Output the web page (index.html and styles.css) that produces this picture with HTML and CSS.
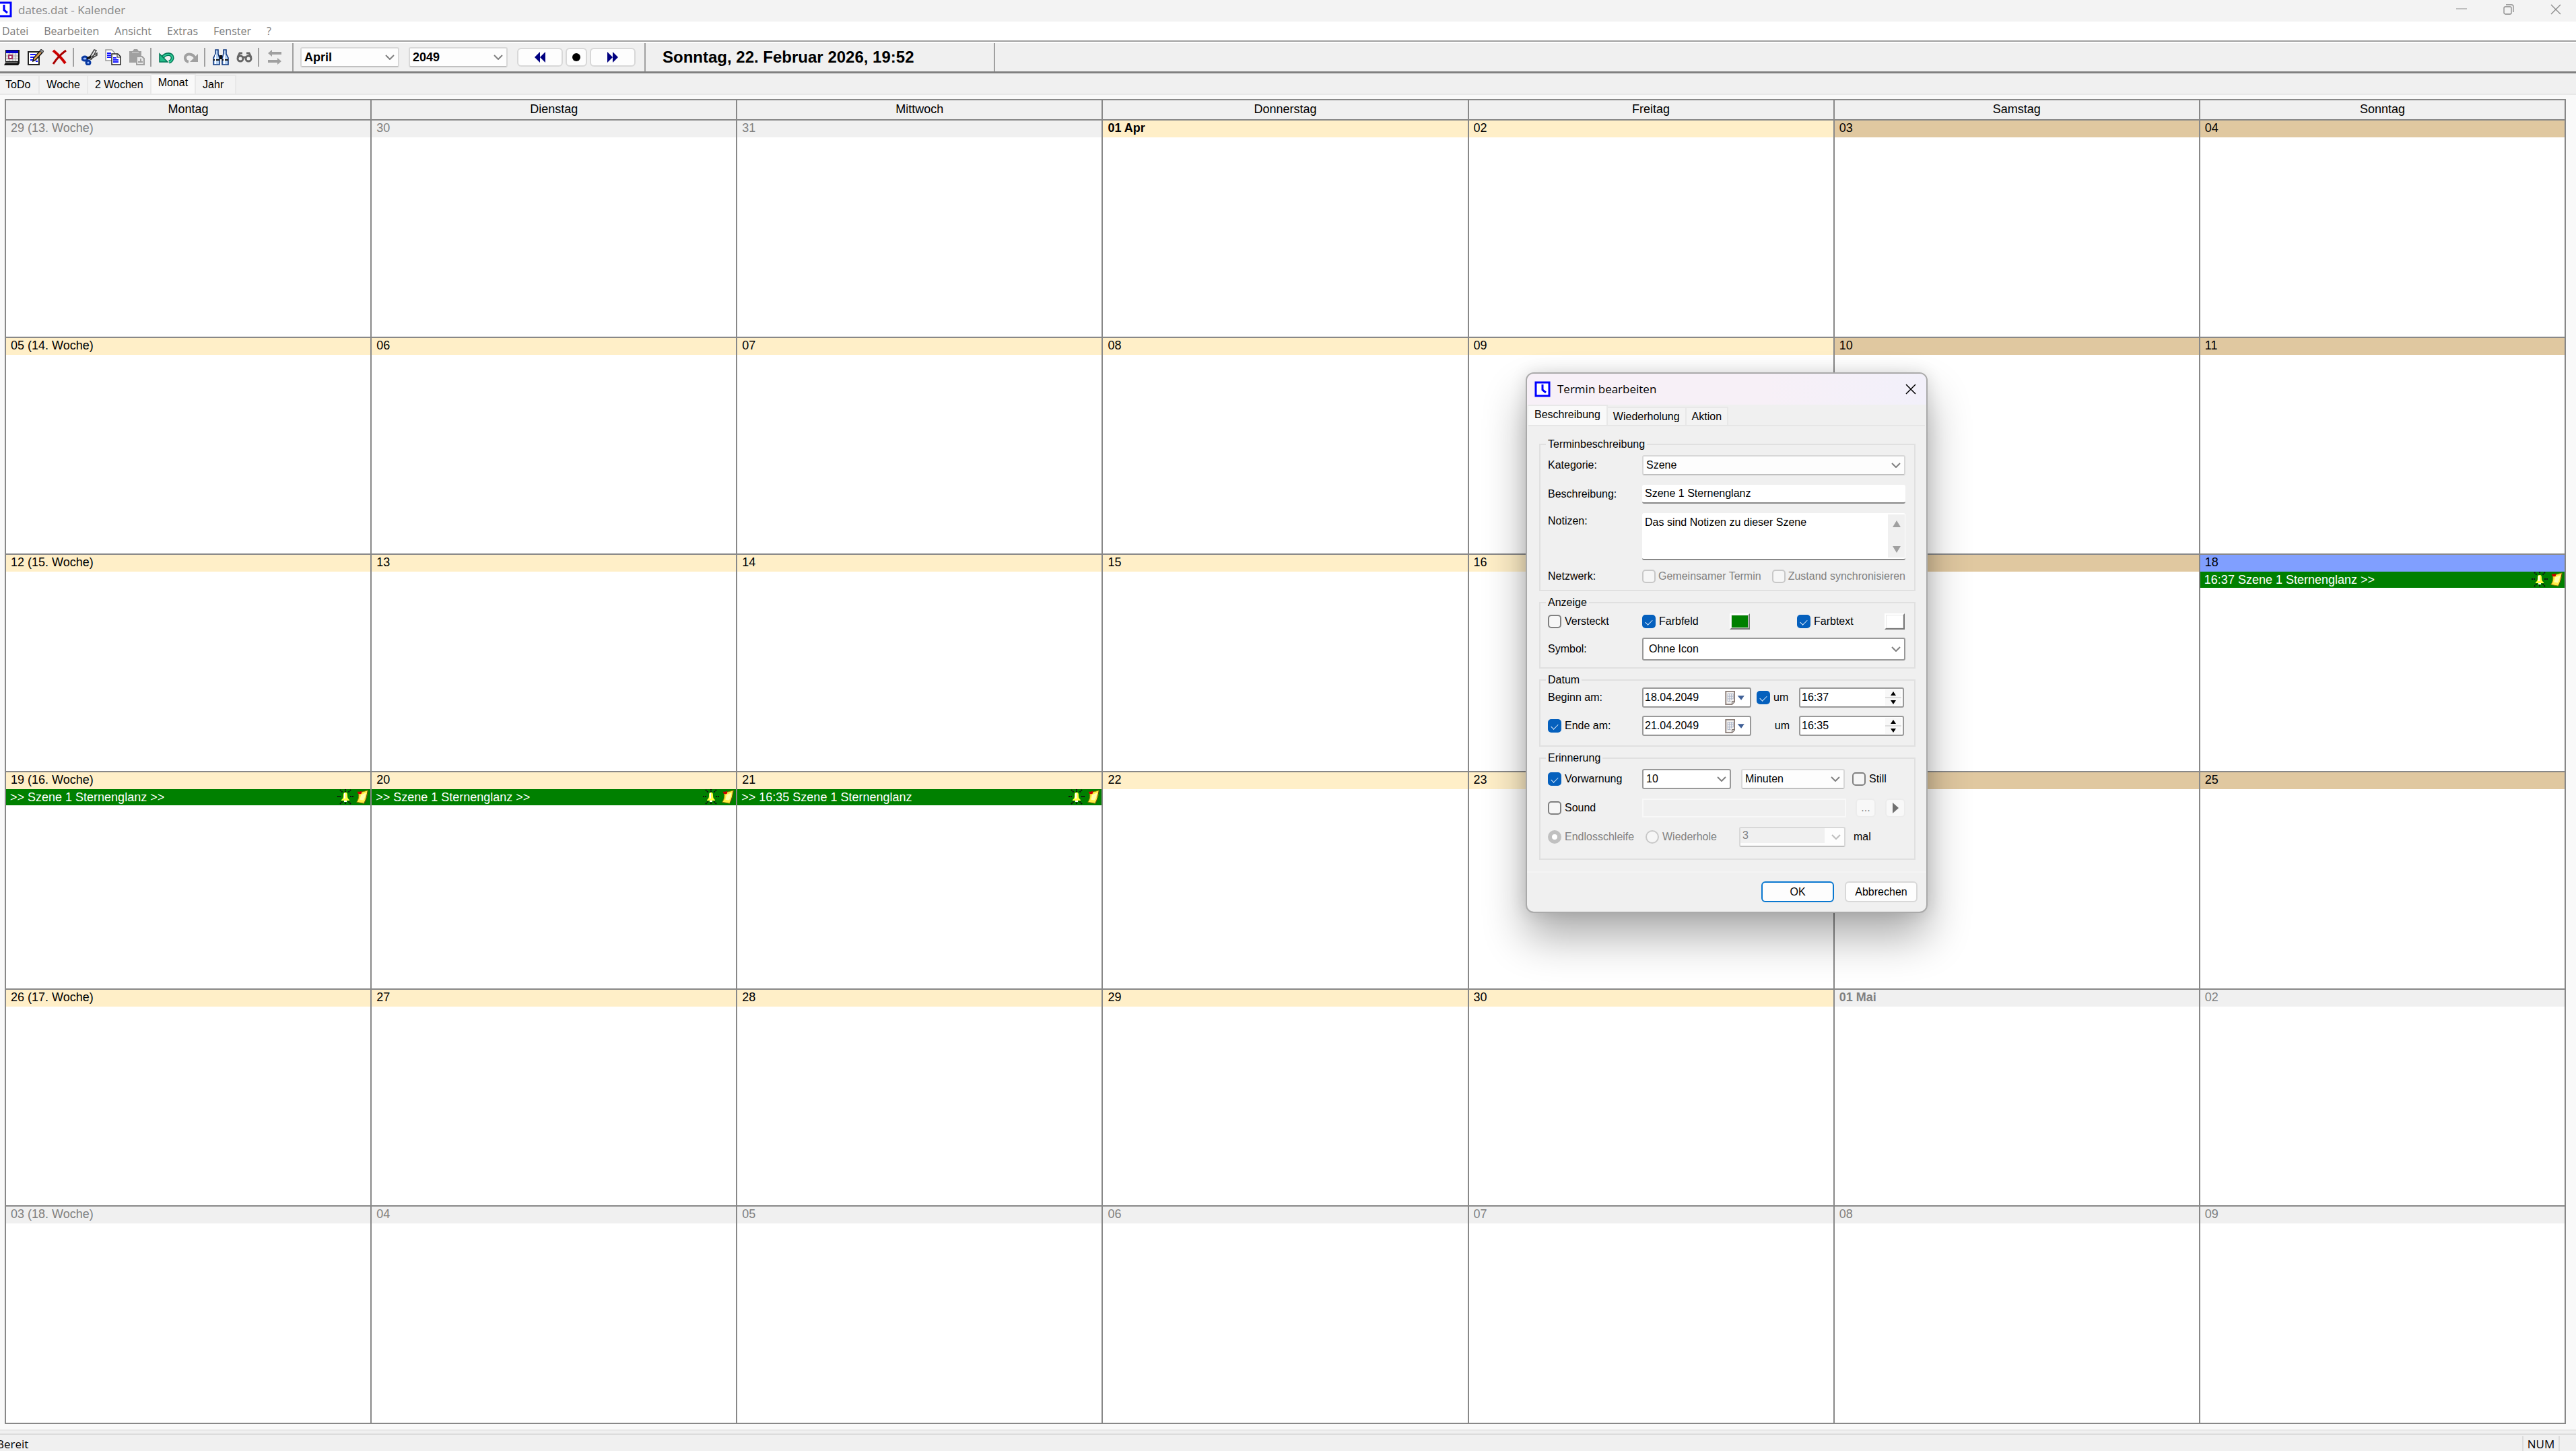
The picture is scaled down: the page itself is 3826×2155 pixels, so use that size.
FILE: index.html
```
<!doctype html>
<html lang="de">
<head>
	<meta charset="utf-8">
	<meta name="viewport" content="width=device-width, initial-scale=1">
	<title>dates.dat - Kalender</title>
	<link rel="stylesheet" href="styles.css">
</head>
<body>

<!-- shared icons -->
<svg class="sprite" aria-hidden="true">
	<symbol id="clock" viewBox="0 0 24 24">
		<rect x="2" y="2" width="20" height="20" fill="#fff" stroke="#00f" stroke-width="3"/>
		<path d="M12 5v8l5 4" fill="none" stroke="#00f" stroke-width="3"/>
	</symbol>
	<symbol id="chevron" viewBox="0 0 14 8">
		<path d="M1 1l6 6 6-6" fill="none" stroke="#808080" stroke-width="2"/>
	</symbol>
	<symbol id="bell" viewBox="0 0 24 24">
		<path d="M4 1l4 4M20 1l-4 4M0 11h5M19 11h5M4 22l4-4M20 22l-4-4M12 0v4M12 20v3" stroke="#111" stroke-width="2" stroke-dasharray="2 1"/>
		<path d="M12 5c-3 0-3 2-3 5s-1 4-3 6v1h12v-1c-2-2-3-3-3-6s0-5-3-5z" fill="#ff4"/>
		<path d="M11 6v8" stroke="#fff" stroke-width="2" fill="none"/>
		<path d="M10 17h4v2h-4z" fill="#fff"/>
	</symbol>
	<symbol id="note" viewBox="0 0 20 24">
		<path d="M4 5l15-4c-1 8-2 13-6 21L1 20c3-4 4-9 3-15z" fill="#fe4" stroke="#970" stroke-width="1"/>
		<path d="M8 8l8-3c-1 6-2 9-4 12l-6-1z" fill="#ffa"/>
		<path d="M2 3h4l3-1v4l-3 1-3-1z" fill="#c00"/>
		<path d="M13 22c4-6 4-12 6-20" stroke="#541" fill="none" stroke-width="1"/>
	</symbol>
	<symbol id="datepick" viewBox="0 0 32 24">
		<path d="M1 2h14v17l-4 4H1z" fill="#f4f2f0" stroke="#8a7d78" stroke-width="2"/>
		<path d="M4 6h9M4 10h9M4 14h9M4 18h5M4 6v12M7 6v12M10 6v10M13 6v8" stroke="#aab4c8" stroke-width="1"/>
		<path d="M15 18h-4v5" fill="#ccc" stroke="#6d625e" stroke-width="1"/>
		<path d="M20 9h11l-5 7z" fill="#3f5f96"/>
	</symbol>
</svg>

<div class="window">
	<header class="titlebar">
		<svg class="app-icon" viewBox="6 0 18 24"><use href="#clock" width="24" height="24"/></svg>
		<span class="titlebar-text">dates.dat - Kalender</span>
		<button class="win-btn" aria-label="Minimieren"><svg width="16" height="16"><path d="M0 7h16" stroke="#888" stroke-width="1"/></svg></button>
		<button class="win-btn" aria-label="Wiederherstellen"><svg width="16" height="16" fill="none" stroke="#888" stroke-width="1.3"><rect x="1" y="4" width="11" height="11" rx="2"/><path d="M4 1h8q3 0 3 3v8"/></svg></button>
		<button class="win-btn" aria-label="Schließen"><svg width="16" height="16"><path d="M1 1l14 14M15 1L1 15" stroke="#888" stroke-width="1.3"/></svg></button>
	</header>

	<nav class="menubar">
		<a href="#datei">Datei</a>
		<a href="#bearbeiten">Bearbeiten</a>
		<a href="#ansicht">Ansicht</a>
		<a href="#extras">Extras</a>
		<a href="#fenster">Fenster</a>
		<a href="#hilfe">?</a>
	</nav>

	<div class="toolbar">
		<div class="tools">
			<button aria-label="Kalender">
				<svg viewBox="0 0 24 24"><path d="M2 1h21v20l-2 3H0l2-4z" fill="#111"/><path d="M3 2h18v4H3z" fill="#00c"/><path d="M3 6h18v12H3z" fill="#e4e4e4"/><path d="M3 10h18M3 14h18M8 6v12M13 6v12M17 6v12" stroke="#a8a8a8"/><path d="M7 9h5v5H7z" fill="#fff" stroke="#a03060" stroke-width="2"/><path d="M2 20h18" stroke="#bbb"/></svg>
			</button>
			<button aria-label="Termin bearbeiten">
				<svg viewBox="0 0 24 24"><path d="M1 4h16v19H1z" fill="#fff" stroke="#222" stroke-width="2"/><path d="M4 8h8M4 12h6M4 16h4M12 18h3" stroke="#11f" stroke-width="2"/><path d="M8 18l1-5 10-11 3 3-10 11z" fill="#d89850" stroke="#111" stroke-width="1.5"/><path d="M18 3l2-3 4 3-2 3z" fill="#888" stroke="#333"/></svg>
			</button>
			<button aria-label="Löschen">
				<svg viewBox="0 0 24 24"><path d="M3 2c5 4 13 12 18 19" stroke="#c00" stroke-width="4" fill="none"/><path d="M22 2C15 7 8 14 3 22" stroke="#a00" stroke-width="3" fill="none"/></svg>
			</button>
			<span class="tool-sep"></span>
			<button aria-label="Ausschneiden">
				<svg viewBox="0 0 24 24"><path d="M11 14L19 1l3 1-7 13zM11 14l12-8v3l-10 6z" fill="#eee" stroke="#444" stroke-width="1.5"/><ellipse cx="5" cy="14" rx="4" ry="3" fill="#9bf" stroke="#0838a0" stroke-width="3"/><ellipse cx="10" cy="20" rx="3" ry="3" fill="#9bf" stroke="#0838a0" stroke-width="3"/><path d="M8 14l6-3" stroke="#111" stroke-width="3"/></svg>
			</button>
			<button aria-label="Kopieren">
				<svg viewBox="0 0 24 24"><path d="M1 1h9l4 4v12H1z" fill="#fff" stroke="#999" stroke-width="1.5"/><path d="M3 6h6M3 9h6M3 12h6" stroke="#11f" stroke-width="2"/><path d="M10 7h9l4 4v12H10z" fill="#fff" stroke="#222" stroke-width="1.5"/><path d="M18 7v5h5" fill="none" stroke="#222"/><path d="M12 13h5M12 16h8M12 19h8" stroke="#11f" stroke-width="2"/></svg>
			</button>
			<button aria-label="Einfügen" disabled>
				<svg viewBox="0 0 24 24"><path d="M1 3h5l2-3h5l2 3h4v17H1z" fill="#a0a0a0"/><path d="M5 5h10" stroke="#ddd"/><path d="M12 11h8l3 3v9H12z" fill="#e8e8e8" stroke="#a0a0a0" stroke-width="2"/><path d="M14 19h7M18 14v4" stroke="#a0a0a0" stroke-width="2"/></svg>
			</button>
			<span class="tool-sep"></span>
			<button aria-label="Rückgängig">
				<svg viewBox="0 0 24 24"><path d="M5 13C10 5 21 6 20 14q-1 4-5 5" fill="none" stroke="#075" stroke-width="5"/><path d="M5 13C10 6 21 6 20 14q-1 4-5 5" fill="none" stroke="#3c9" stroke-width="2"/><path d="M1 7v12h12z" fill="#2b8" stroke="#075" stroke-width="1.5"/></svg>
			</button>
			<button aria-label="Wiederholen" disabled>
				<svg viewBox="0 0 24 24"><path d="M19 13C14 5 3 6 4 14q1 4 5 5" fill="none" stroke="#a0a0a0" stroke-width="4"/><path d="M23 7v12H11z" fill="#a0a0a0"/></svg>
			</button>
			<span class="tool-sep"></span>
			<button aria-label="Suchen">
				<svg viewBox="0 0 24 24"><path d="M4 1h4v6l2 6v10H1V13l3-6zM16 1h4v6l3 6v10h-9V13l2-6z" fill="#b8d4f4" stroke="#123a80" stroke-width="1.6"/><path d="M10 9h4v6h-4z" fill="#111"/><path d="M1 16h9M14 16h9" stroke="#111" stroke-width="2"/><path d="M4 8v14M17 8v14" stroke="#fff" stroke-width="2"/></svg>
			</button>
			<button aria-label="Anzeigen">
				<svg viewBox="0 0 24 24" fill="none" stroke="#666" stroke-width="3"><circle cx="6" cy="14" r="4"/><circle cx="18" cy="14" r="4"/><path d="M2 12l3-6h4M22 12l-3-6h-4M9 12h6"/></svg>
			</button>
			<span class="tool-sep"></span>
			<button aria-label="Synchronisieren" disabled>
				<svg viewBox="0 0 24 24"><path d="M2 6l6-5v3h14v4H8v3zM22 18l-6-5v3H2v4h14v3z" fill="#a0a0a0"/></svg>
			</button>
		</div>
		<div class="toolbar-nav">
			<span class="select month"><select aria-label="Monat"><option>April</option></select><svg><use href="#chevron"/></svg></span>
			<span class="select month"><select aria-label="Jahr"><option>2049</option></select><svg><use href="#chevron"/></svg></span>
			<div class="nav-buttons">
				<button class="btn wide" aria-label="Zurück"><svg width="18" height="16"><path d="M9 0v16L1 8zM17 0v16L9 8z" fill="#000080"/></svg></button>
				<button class="btn" aria-label="Heute"><svg width="12" height="12"><circle cx="6" cy="6" r="6"/></svg></button>
				<button class="btn wide" aria-label="Vor"><svg width="18" height="16"><path d="M1 0v16l8-8zM9 0v16l8-8z" fill="#000080"/></svg></button>
			</div>
		</div>
		<div class="now">Sonntag, 22. Februar 2026, 19:52</div>
	</div>

	<div class="tabs main-tabs" role="tablist">
		<button class="tab" role="tab">ToDo</button>
		<button class="tab" role="tab">Woche</button>
		<button class="tab" role="tab">2 Wochen</button>
		<button class="tab active" role="tab" aria-selected="true">Monat</button>
		<button class="tab last" role="tab">Jahr</button>
	</div>

	<main class="pane">
		<table class="calendar">
			<thead>
				<tr><th>Montag</th><th>Dienstag</th><th>Mittwoch</th><th>Donnerstag</th><th>Freitag</th><th>Samstag</th><th>Sonntag</th></tr>
			</thead>
			<tbody>
				<tr>
					<td class="other"><div class="day">29 (13. Woche)</div></td>
					<td class="other"><div class="day">30</div></td>
					<td class="other"><div class="day">31</div></td>
					<td><div class="day first">01 Apr</div></td>
					<td><div class="day">02</div></td>
					<td class="weekend"><div class="day">03</div></td>
					<td class="weekend"><div class="day">04</div></td>
				</tr>
				<tr>
					<td><div class="day">05 (14. Woche)</div></td>
					<td><div class="day">06</div></td>
					<td><div class="day">07</div></td>
					<td><div class="day">08</div></td>
					<td><div class="day">09</div></td>
					<td class="weekend"><div class="day">10</div></td>
					<td class="weekend"><div class="day">11</div></td>
				</tr>
				<tr>
					<td><div class="day">12 (15. Woche)</div></td>
					<td><div class="day">13</div></td>
					<td><div class="day">14</div></td>
					<td><div class="day">15</div></td>
					<td><div class="day">16</div></td>
					<td class="weekend"><div class="day">17</div></td>
					<td class="selected"><div class="day">18</div>
						<div class="event"><span>16:37 Szene 1 Sternenglanz &gt;&gt;</span><svg class="bell"><use href="#bell"/></svg><svg class="note"><use href="#note"/></svg></div></td>
				</tr>
				<tr>
					<td><div class="day">19 (16. Woche)</div>
						<div class="event"><span>&gt;&gt; Szene 1 Sternenglanz &gt;&gt;</span><svg class="bell"><use href="#bell"/></svg><svg class="note"><use href="#note"/></svg></div></td>
					<td><div class="day">20</div>
						<div class="event"><span>&gt;&gt; Szene 1 Sternenglanz &gt;&gt;</span><svg class="bell"><use href="#bell"/></svg><svg class="note"><use href="#note"/></svg></div></td>
					<td><div class="day">21</div>
						<div class="event"><span>&gt;&gt; 16:35 Szene 1 Sternenglanz</span><svg class="bell"><use href="#bell"/></svg><svg class="note"><use href="#note"/></svg></div></td>
					<td><div class="day">22</div></td>
					<td><div class="day">23</div></td>
					<td class="weekend"><div class="day">24</div></td>
					<td class="weekend"><div class="day">25</div></td>
				</tr>
				<tr>
					<td><div class="day">26 (17. Woche)</div></td>
					<td><div class="day">27</div></td>
					<td><div class="day">28</div></td>
					<td><div class="day">29</div></td>
					<td><div class="day">30</div></td>
					<td class="other"><div class="day first">01 Mai</div></td>
					<td class="other"><div class="day">02</div></td>
				</tr>
				<tr>
					<td class="other"><div class="day">03 (18. Woche)</div></td>
					<td class="other"><div class="day">04</div></td>
					<td class="other"><div class="day">05</div></td>
					<td class="other"><div class="day">06</div></td>
					<td class="other"><div class="day">07</div></td>
					<td class="other"><div class="day">08</div></td>
					<td class="other"><div class="day">09</div></td>
				</tr>
			</tbody>
		</table>
	</main>

	<footer class="statusbar">
		<span class="status-text">Bereit</span>
		<span class="status-num">NUM</span>
	</footer>
</div>

<form class="dialog" role="dialog" aria-labelledby="dialog-title">
	<header class="dialog-title">
		<svg class="dialog-icon"><use href="#clock"/></svg>
		<span id="dialog-title">Termin bearbeiten</span>
		<button type="button" class="dialog-close" aria-label="Schließen"><svg width="16" height="16"><path d="M1 1l14 14M15 1L1 15" stroke="#000" stroke-width="1.5"/></svg></button>
	</header>

	<div class="tabs dialog-tabs" role="tablist">
		<button type="button" class="tab active" role="tab" aria-selected="true">Beschreibung</button>
		<button type="button" class="tab" role="tab">Wiederholung</button>
		<button type="button" class="tab" role="tab">Aktion</button>
	</div>

	<div class="dialog-body">
		<fieldset>
			<legend>Terminbeschreibung</legend>
			<div class="row">
				<label for="kategorie">Kategorie:</label>
				<span class="select"><select id="kategorie"><option>Szene</option></select><svg><use href="#chevron"/></svg></span>
			</div>
			<div class="row">
				<label for="beschreibung">Beschreibung:</label>
				<input type="text" class="line-input" id="beschreibung" value="Szene 1 Sternenglanz">
			</div>
			<div class="row top">
				<label for="notizen">Notizen:</label>
				<div class="notes">
					<textarea id="notizen">Das sind Notizen zu dieser Szene</textarea>
					<div class="scroll">
						<svg width="14" height="12"><path d="M7 1l6 10H1z" fill="#a0a0a0"/></svg>
						<svg width="14" height="12"><path d="M7 11L1 1h12z" fill="#a0a0a0"/></svg>
					</div>
				</div>
			</div>
			<div class="row">
				<span>Netzwerk:</span>
				<div class="pair">
					<label class="check off"><input type="checkbox" disabled>Gemeinsamer Termin</label>
					<label class="check off"><input type="checkbox" disabled>Zustand synchronisieren</label>
				</div>
			</div>
		</fieldset>

		<fieldset class="display">
			<legend>Anzeige</legend>
			<div class="row">
				<label class="check"><input type="checkbox">Versteckt</label>
				<div class="colors">
					<label class="check"><input type="checkbox" checked>Farbfeld</label>
					<button type="button" class="swatch green" aria-label="Feldfarbe"></button>
					<label class="check"><input type="checkbox" checked>Farbtext</label>
					<button type="button" class="swatch" aria-label="Textfarbe"></button>
				</div>
			</div>
			<div class="row">
				<label for="symbol">Symbol:</label>
				<span class="select icon-select"><select id="symbol"><option>Ohne Icon</option></select><svg><use href="#chevron"/></svg></span>
			</div>
		</fieldset>

		<fieldset class="dates">
			<legend>Datum</legend>
			<div class="row">
				<label for="beginn">Beginn am:</label>
				<div class="date-time">
					<div class="field"><input type="text" id="beginn" value="18.04.2049"><svg class="datepick"><use href="#datepick"/></svg></div>
					<label class="check"><input type="checkbox" checked>um</label>
					<div class="field"><input type="text" aria-label="Beginn um" value="16:37">
						<span class="spin"><button type="button" aria-label="Später"><svg width="8" height="6"><path d="M4 0l4 6H0z"/></svg></button><button type="button" aria-label="Früher"><svg width="8" height="6"><path d="M4 6L0 0h8z"/></svg></button></span></div>
				</div>
			</div>
			<div class="row">
				<label class="check"><input type="checkbox" checked>Ende am:</label>
				<div class="date-time">
					<div class="field"><input type="text" aria-label="Ende am" value="21.04.2049"><svg class="datepick"><use href="#datepick"/></svg></div>
					<label class="um" for="ende-um">um</label>
					<div class="field"><input type="text" id="ende-um" value="16:35">
						<span class="spin"><button type="button" aria-label="Später"><svg width="8" height="6"><path d="M4 0l4 6H0z"/></svg></button><button type="button" aria-label="Früher"><svg width="8" height="6"><path d="M4 6L0 0h8z"/></svg></button></span></div>
				</div>
			</div>
		</fieldset>

		<fieldset class="reminder">
			<legend>Erinnerung</legend>
			<div class="row">
				<label class="check"><input type="checkbox" checked>Vorwarnung</label>
				<div class="warn">
					<span class="select edit"><select aria-label="Vorwarnzeit"><option>10</option></select><svg><use href="#chevron"/></svg></span>
					<span class="select"><select aria-label="Einheit"><option>Minuten</option></select><svg><use href="#chevron"/></svg></span>
					<label class="check"><input type="checkbox">Still</label>
				</div>
			</div>
			<div class="row">
				<label class="check"><input type="checkbox">Sound</label>
				<div class="sound">
					<input type="text" aria-label="Sounddatei" disabled>
					<button type="button" class="btn small" disabled>...</button>
					<button type="button" class="btn small" aria-label="Abspielen" disabled><svg width="10" height="16"><path d="M1 0l9 8-9 8z" fill="#707070"/></svg></button>
				</div>
			</div>
			<div class="row loop">
				<label class="check off"><input type="radio" name="loop" checked disabled>Endlosschleife</label>
				<label class="check off"><input type="radio" name="loop" disabled>Wiederhole</label>
				<span class="select count"><select id="mal" disabled><option>3</option></select><svg><use href="#chevron"/></svg></span>
				<label for="mal">mal</label>
			</div>
		</fieldset>
	</div>

	<footer class="dialog-footer">
		<button type="button" class="btn default">OK</button>
		<button type="button" class="btn">Abbrechen</button>
	</footer>
</form>

</body>
</html>
```
FILE: styles.css
```
* {
	box-sizing: border-box;
}

body {
	margin: 0;
	background: #f0f0f0;
	color: #000;
	font: 16px/20px "Liberation Sans", Arial, sans-serif;
}

button, input, select, textarea {
	font: inherit;
	color: inherit;
	margin: 0;
	padding: 0;
	border: 0;
	border-radius: 0;
	background: none;
	outline: none;
}

svg {
	display: block;
}

.sprite {
	display: none;
}

.window {
	display: flex;
	flex-direction: column;
	height: 100vh;
	overflow: hidden;
}

/* title bar and menu */

.titlebar {
	display: flex;
	align-items: center;
	height: 32px;
	background: #f3f3f3;
	color: #888;
	font: 17px/24px "Open Sans", "Noto Sans", sans-serif;
}

.app-icon {
	width: 18px;
	height: 24px;
	margin: 0 9px 4px 0;
}

.titlebar-text {
	flex: 1;
	padding-bottom: 2px;
}

.win-btn {
	display: flex;
	justify-content: center;
	align-items: center;
	width: 70px;
	height: 28px;
	margin-bottom: 4px;
}

.win-btn:last-child {
	margin-right: -5px;
}

.menubar {
	display: flex;
	align-items: center;
	gap: 23px;
	height: 28px;
	padding: 0 3px;
	background: #fff;
	font: 16px/24px "Open Sans", "Noto Sans", sans-serif;
}

.menubar a {
	color: #7c7c7c;
	text-decoration: none;
}

/* toolbar */

.toolbar {
	display: flex;
	height: 49px;
	border-top: 2px solid #a0a0a0;
	border-bottom: 3px solid #808080;
	box-shadow: inset 0 2px #fff;
	padding-top: 2px;
}

.tools, .toolbar-nav, .now {
	display: flex;
	align-items: center;
	border-right: 2px solid #a0a0a0;
}

.tools {
	padding-right: 9px;
}

.tools button {
	display: flex;
	justify-content: center;
	align-items: center;
	width: 35px;
	height: 36px;
}

.tools svg {
	width: 24px;
	height: 24px;
}

.tool-sep {
	width: 2px;
	height: 28px;
	margin: 0 5px 0 3px;
	background: #a0a0a0;
}

.toolbar-nav {
	gap: 14px;
	padding: 0 13px 0 10px;
	font-size: 18px;
	font-weight: bold;
}

.nav-buttons {
	display: flex;
	gap: 4px;
}

.month {
	width: 147px;
}

.now {
	width: 519px;
	padding-left: 25px;
	font-size: 24px;
	font-weight: bold;
}

.btn {
	display: flex;
	justify-content: center;
	align-items: center;
	width: 32px;
	height: 28px;
	border: 2px solid #d8d8d8;
	border-radius: 6px;
	background: #fdfdfd;
}

.btn.wide {
	width: 68px;
}

/* drop-downs: the arrow sits in the same grid cell as the select */

.select {
	display: grid;
	align-items: center;
	height: 30px;
	border: 2px solid #d8d8d8;
	border-bottom-color: #c0c0c0;
	border-radius: 3px;
	background: #fdfdfd;
}

.select select {
	grid-area: 1 / 1;
	width: 100%;
	height: 100%;
	padding-left: 4px;
	appearance: none;
}

.select svg {
	grid-area: 1 / 1;
	justify-self: end;
	width: 14px;
	height: 8px;
	margin-right: 5px;
	pointer-events: none;
}

/* tabs */

.tabs {
	display: flex;
	align-items: flex-end;
}

.tab {
	height: 28px;
	padding: 0 8px;
	border: 2px solid #e8e8e8;
	border-width: 2px 2px 0 0;
	background: #f3f3f3;
}

.tab.active {
	height: 30px;
	padding-bottom: 4px;
	background: #f9f9f9;
}

.main-tabs {
	height: 30px;
}

.main-tabs .tab {
	padding: 0 10px;
}

.main-tabs .tab:first-child {
	padding: 0 12px 0 8px;
}

.main-tabs .tab.active {
	padding: 0 10px 4px;
}

.main-tabs .last {
	padding-right: 17px;
}

/* month view */

.pane {
	flex: 1;
	display: flex;
	min-height: 0;
	padding: 6px 15px 8px 7px;
	border-top: 2px solid #e8e8e8;
	border-bottom: 2px solid #e8e8e8;
	background: #f9f9f9;
}

.calendar {
	flex: 1;
	display: grid;
	grid-template-rows: auto 1fr;
	border: 2px solid #888;
	border-width: 0 2px 2px 0;
	background: #fff;
	font-size: 18px;
}

.calendar thead {
	display: block;
}

.calendar tbody {
	display: grid;
	grid-template-rows: repeat(6, 1fr);
}

.calendar tr {
	display: grid;
	grid-template-columns: repeat(7, 1fr);
}

.calendar th {
	height: 30px;
	padding: 0;
	border: 2px solid #888;
	border-width: 2px 0 0 2px;
	background: #f0f0f0;
	font-weight: normal;
	line-height: 26px;
}

.calendar td {
	padding: 0;
	border: 2px solid #888;
	border-width: 2px 0 0 2px;
}

.day {
	height: 25px;
	padding-left: 7px;
	background: #ffefc8;
	line-height: 23px;
}

.day.first {
	font-weight: bold;
}

.other .day {
	background: #f0f0f0;
	color: #808080;
}

.weekend .day {
	background: #e0c8a0;
}

.selected .day {
	background: #809fff;
}

.event {
	display: flex;
	align-items: center;
	height: 24px;
	padding: 0 2px 0 6px;
	background: #008000;
	color: #fff;
}

.event span {
	flex: 1;
}

.bell {
	width: 24px;
	height: 24px;
}

.note {
	width: 20px;
	height: 22px;
	margin-left: 3px;
}

/* status bar */

.statusbar {
	display: flex;
	height: 30px;
	padding-top: 8px;
	box-shadow: inset 0 4px #f0f0f0, inset 0 6px #dcdcdc;
	font: 17px/24px "Open Sans", "Noto Sans", sans-serif;
}

.status-text {
	flex: 1;
	margin-left: -5px;
}

.status-num {
	width: 56px;
	margin-right: 24px;
	border: 2px solid #dcdcdc;
	border-width: 0 2px;
	text-align: center;
}

/* appointment dialog, floats over the month view */

.dialog {
	position: absolute;
	left: 2266px;
	top: 553px;
	width: 597px;
	border: 2px solid #aaa;
	border-radius: 12px;
	background: #f0f0f0;
	box-shadow: 0 36px 64px rgba(0, 0, 0, .32), 0 0 24px rgba(0, 0, 0, .12);
	overflow: hidden;
}

.dialog-title {
	display: flex;
	align-items: center;
	height: 46px;
	padding: 0 15px 0 11px;
	background: linear-gradient(to right, #f7f0f7 60%, #f2f0fa);
	font: 17px/24px "Open Sans", "Noto Sans", sans-serif;
}

.dialog-icon {
	width: 24px;
	height: 24px;
	margin-right: 10px;
}

.dialog-title span {
	flex: 1;
}

.dialog-tabs {
	height: 32px;
	margin: 0 2px;
	border-bottom: 2px solid #e6e6e6;
}

.dialog-tabs .tab {
	height: 27px;
}

.dialog-tabs .tab.active {
	height: 30px;
	padding: 0 9px 3px;
}

.dialog-body {
	display: flex;
	flex-direction: column;
	gap: 7px;
	padding: 17px 16px 17px 18px;
	border-bottom: 2px solid #f4f4f4;
}

fieldset {
	display: flex;
	flex-direction: column;
	gap: 14px;
	min-width: 0;
	margin: 0;
	padding: 6px 13px 10px 11px;
	border: 2px solid #e0e0e0;
}

legend {
	margin-left: -3px;
	padding: 0 3px;
}

.row {
	display: grid;
	grid-template-columns: 140px 1fr;
	align-items: center;
}

.row.top {
	align-items: start;
}

.row.top label {
	padding-top: 2px;
}

.line-input {
	height: 28px;
	padding-left: 4px;
	border-bottom: 2px solid #888;
	border-radius: 3px;
	background: #fff;
}

.notes {
	display: flex;
	height: 70px;
	border-bottom: 2px solid #888;
	border-radius: 3px;
	background: #fff;
}

.notes textarea {
	flex: 1;
	padding: 4px;
	resize: none;
}

.scroll {
	display: flex;
	flex-direction: column;
	justify-content: space-between;
	align-items: center;
	width: 25px;
	margin: 2px 1px;
	padding: 8px 0 6px;
	background: #f0f0f0;
}

.check {
	display: flex;
	align-items: center;
	gap: 5px;
	white-space: nowrap;
}

.check.off {
	color: #808080;
}

.check input {
	display: grid;
	place-items: center;
	width: 20px;
	height: 20px;
	border: 2px solid #808080;
	border-radius: 5px;
	background: #f6f6f6;
	appearance: none;
}

.check input:checked {
	border-color: #0560bd;
	background: #0560bd;
}

.check input[type="checkbox"]:checked::after {
	content: "";
	width: 5px;
	height: 9px;
	border: solid #d8e8f8;
	border-width: 0 1px 1px 0;
	transform: rotate(45deg);
}

.check input:disabled {
	border-color: #c8c8c8;
}

.check input[type="radio"] {
	border-radius: 50%;
}

.check input[type="radio"]:checked {
	border: 6px solid #c0c0c0;
	background: #fff;
}

.pair {
	display: flex;
	justify-content: space-between;
}

.pair .check {
	gap: 4px;
}

.display, .dates {
	gap: 12px;
}

.colors {
	display: grid;
	grid-template-columns: 130px 100px 130px 30px;
}

.swatch {
	width: 30px;
	height: 24px;
	border: 2px solid #fff;
	border-right-color: #777;
	border-bottom-color: #777;
	background: #fff;
	box-shadow: inset 0 0 0 1px #e8e8e8;
}

.swatch.green {
	background: #008000;
}

.icon-select {
	height: 34px;
	border-color: #999;
	background: #fff;
}

.icon-select select {
	padding-left: 8px;
}

.dates {
	padding-top: 1px;
	padding-bottom: 14px;
}

.date-time {
	display: grid;
	grid-template-columns: 162px 55px 156px;
	align-items: center;
	column-gap: 8px;
}

.um {
	text-align: right;
	padding-right: 6px;
}

.field {
	display: flex;
	align-items: center;
	height: 30px;
	border: 2px solid #999;
	border-radius: 3px;
	background: #fff;
}

.field input {
	flex: 1;
	min-width: 0;
	padding-left: 2px;
}

.datepick {
	width: 32px;
	height: 22px;
	margin-right: 6px;
}

.spin {
	display: grid;
	width: 24px;
	height: 24px;
	margin-right: 2px;
	gap: 2px;
	background: #ddd;
}

.spin button {
	display: grid;
	place-items: center;
	height: 11px;
	background: #f8f8f8;
}

.reminder {
	padding-bottom: 17px;
}

.warn {
	display: grid;
	grid-template-columns: 132px 154px auto;
	gap: 15px;
	margin-right: -10px;
	align-items: center;
}

.warn .check:last-child {
	margin-left: -4px;
}

.edit {
	border-color: #999;
	background: #fff;
}

.sound {
	display: grid;
	grid-template-columns: 1fr 30px 30px;
	gap: 14px;
}

.sound input {
	min-width: 0;
	border: 2px solid #f8f8f8;
}

.btn.small {
	width: 30px;
	border-color: #ececec;
	background: #f8f8f8;
	color: #808080;
}

.loop {
	grid-template-columns: 145px 139px 158px auto;
}

.loop label:last-child {
	margin-left: 12px;
}

.count select {
	width: auto;
	height: 22px;
	margin: 0 29px 4px 0;
	padding-left: 3px;
	background: #f0f0f0;
	color: #808080;
	opacity: 1;
}

.count svg {
	opacity: .5;
}

.dialog-footer {
	display: flex;
	justify-content: flex-end;
	gap: 16px;
	padding: 13px 13px 14px;
}

.dialog-footer .btn {
	width: 108px;
	height: 31px;
}

.dialog-footer .default {
	border-color: #0a78d0;
}
```
